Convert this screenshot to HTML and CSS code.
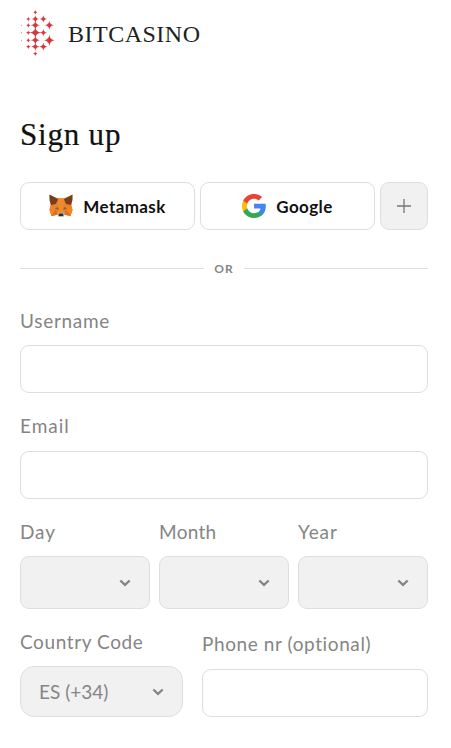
FILE: index.html
```
<!DOCTYPE html>
<html lang="en">
	<head>
		<meta charset="utf-8">
		<title>Sign up</title>
		<link rel="stylesheet" href="styles.css">
	</head>
<body>
	<!-- One arrow and one star, reused below. -->
	<svg class="defs">
		<symbol id="star" viewBox="-8 -8 16 16" overflow="visible"><path d="M0-10Q1-3.500 3.200-3.200Q3.500-1 10 0Q3.500 1 3.200 3.200Q1 3.500 0 10Q-1 3.500-3.200 3.200Q-3.500 1-10 0Q-3.500-1-3.200-3.200Q-1-3.500 0-10z"/></symbol>
		<symbol id="arrow" viewBox="0 0 12 8"><path d="M1.3 1.5L6 5.9L10.7 1.5" fill="none" stroke="#858585" stroke-width="2.3"/></symbol>
	</svg>

	<div class="page">
		<div class="logo">
			<svg class="logoMark" viewBox="30 27 108 144" fill="#d63840">
				<use href="#star" x="32" y="74" width="4" height="4"/>
				<use href="#star" x="32" y="96" width="4" height="4"/>
				<use href="#star" x="32" y="119" width="4" height="4"/>
				<use href="#star" x="49" y="51" width="12" height="12"/>
				<use href="#star" x="49" y="70" width="12" height="12"/>
				<use href="#star" x="49" y="92" width="12" height="12"/>
				<use href="#star" x="49" y="115" width="12" height="12"/>
				<use href="#star" x="49" y="134" width="12" height="12"/>
				<use href="#star" x="70" y="31" width="12" height="12"/>
				<use href="#star" x="67" y="48" width="18" height="18"/>
				<use href="#star" x="65" y="65" width="22" height="22"/>
				<use href="#star" x="62" y="84" width="28" height="28"/>
				<use href="#star" x="65" y="110" width="22" height="22"/>
				<use href="#star" x="66" y="130" width="20" height="20"/>
				<use href="#star" x="70" y="155" width="12" height="12"/>
				<use href="#star" x="91" y="48" width="18" height="18"/>
				<use href="#star" x="91" y="89" width="18" height="18"/>
				<use href="#star" x="90" y="130" width="20" height="20"/>
				<use href="#star" x="107" y="65" width="22" height="22"/>
				<use href="#star" x="104" y="107" width="28" height="28"/>
			</svg>
			<span class="logoText">BITCASINO</span>
		</div>

		<h1>Sign up</h1>

		<div class="social">
			<button class="socialButton metamask">
				<svg width="24" height="24" viewBox="0.5 1 23 23">
					<path fill="#e9822a" d="M1 2L9 5H15L23 2L22 11L23 16L21 22L15.5 21L14 23H10L8.5 21L3 22L1 16L2 11z"/>
					<path fill="#763e1a" d="M1 1.500L9.300 6L7 10.500L2.500 11.500L1 7zM23 1.500L14.700 6L17 10.500L21.500 11.500L23 7z"/>
					<path fill="#f08a2c" d="M9 5H15L14 16L15.500 21H8.500L10 16z"/>
					<path fill="#dc7022" d="M1 16L7 15.500L8.500 21L3 22zM23 16L17 15.500L15.500 21L21 22z"/>
					<path fill="#f5841f" d="M1 16L2.500 12L7 15.500L3 22zM23 16L21.500 12L17 15.500L21 22z"/>
					<path fill="#94664b" d="M6 15L9 13.500L9.700 16zM18 15L15 13.500L14.300 16z"/>
					<path fill="#68615e" d="M7.500 15L9 14.300L9.500 16zM16.500 15L15 14.300L14.500 16z"/>
					<path fill="#c9bdb0" d="M8.300 20L10 19H14L15.700 20L14 23H10z"/>
					<path fill="#233447" d="M10 19.800H14L14.300 22H9.700z"/>
				</svg>
				<span>Metamask</span>
			</button>
			<button class="socialButton google">
				<svg width="24" height="24" viewBox="0 0 24 24">
					<path fill="#4285f4" d="M23.800 12.300c0-.8-.1-1.600-.2-2.500H12v4.800h6.600c-.3 1.500-1.100 2.800-2.400 3.700v3h3.900c2.300-2.100 3.700-5.200 3.700-9z"/>
					<path fill="#34a853" d="M12 24c3.300 0 6-1.100 8.100-2.900l-3.900-3c-1.100.7-2.500 1.200-4.200 1.200-3.200 0-5.900-2.100-6.800-5H1.200v3.100C3.200 21.300 7.300 24 12 24z"/>
					<path fill="#fbbc05" d="M5.200 14.300c-.5-1.500-.5-3.100 0-4.600V6.600h-4c-1.600 3.400-1.600 7.400 0 10.800z"/>
					<path fill="#ea4335" d="M12 4.700c1.800 0 3.400.6 4.700 1.800l3.400-3.400C18 1.200 15.200 0 12 0 7.300 0 3.200 2.700 1.200 6.600l4 3.100c.9-2.900 3.600-5 6.800-5z"/>
				</svg>
				<span>Google</span>
			</button>
			<button class="socialButton more" aria-label="More">
				<svg width="14" height="14" viewBox="0 0 14 14"><path d="M0 7H14M7 0V14" stroke="#777" stroke-width="1.3"/></svg>
			</button>
		</div>

		<div class="divider">OR</div>

		<form>
			<div class="field">
				<label class="username" for="username">Username</label>
				<input id="username" type="text">
			</div>
			<div class="field">
				<label class="email" for="email">Email</label>
				<input id="email" type="text">
			</div>
			<div class="row birth">
				<div class="field">
					<label class="day">Day</label>
					<div class="select"><svg width="12" height="8"><use href="#arrow"/></svg></div>
				</div>
				<div class="field">
					<label class="month">Month</label>
					<div class="select"><svg width="12" height="8"><use href="#arrow"/></svg></div>
				</div>
				<div class="field">
					<label class="year">Year</label>
					<div class="select"><svg width="12" height="8"><use href="#arrow"/></svg></div>
				</div>
			</div>
			<div class="row phone">
				<div class="field">
					<label class="country">Country Code</label>
					<div class="select code"><span>ES (+34)</span><svg width="12" height="8"><use href="#arrow"/></svg></div>
				</div>
				<div class="field">
					<label class="number" for="phone">Phone nr (optional)</label>
					<input id="phone" type="text">
				</div>
			</div>
		</form>
	</div>
</body>
</html>
```
FILE: styles.css
```
* {
	box-sizing: border-box;
}
body {
	margin: 0;
	background-color: #fff;
	color: #858585;
	font-family: Lato, 'Liberation Sans', sans-serif;
}
.defs {
	display: none;
}
.page {
	width: 448px;
	padding: 9px 20px 0;
}
.logo {
	display: flex;
	align-items: center;
	height: 48px;
}
.logoMark {
	width: 36px;
	height: 48px;
}
.logoText {
	margin-left: 12px;
	padding-top: 1px;
	color: #231f20;
	font-family: 'Liberation Serif', serif;
	font-size: 24px;
	line-height: 48px;
	letter-spacing: 0.5px;
	white-space: nowrap;
}
h1 {
	margin: 58px 0 27px;
	color: #111;
	font-family: 'Liberation Serif', serif;
	font-size: 31px;
	font-weight: normal;
	line-height: 40px;
	letter-spacing: 0.8px;
	-webkit-text-stroke: 0.2px #111;
}
.social {
	display: flex;
	gap: 5px;
}
.socialButton {
	display: flex;
	align-items: center;
	justify-content: center;
	gap: 10px;
	width: 175px;
	height: 48px;
	padding: 0;
	border: 1px solid #dedede;
	border-radius: 9px;
	background-color: #fff;
	color: #111;
	font-family: inherit;
	font-size: 17px;
	font-weight: bold;
	line-height: 24px;
	letter-spacing: 0.4px;
}
.socialButton span {
	padding-top: 2px;
}
.more {
	width: 48px;
	background-color: #f1f1f1;
}
.divider {
	display: flex;
	align-items: center;
	gap: 10px;
	margin: 29px 0 31px;
	font-size: 12px;
	font-weight: bold;
	line-height: 19px;
	letter-spacing: 1px;
}
.divider:before, .divider:after {
	content: "";
	flex: 1;
	height: 1px;
	background-color: #dedede;
}
.field {
	margin-bottom: 22px;
}
label {
	display: block;
	margin-bottom: 14px;
	font-size: 19px;
	line-height: 22px;
	letter-spacing: 0.6px;
	white-space: nowrap;
}
.username {
	margin-bottom: 12px;
	line-height: 24px;
	letter-spacing: 0.7px;
}
.email {
	letter-spacing: 1px;
}
.day, .year {
	letter-spacing: 0.9px;
}
.month {
	letter-spacing: 0.3px;
}
input {
	display: block;
	width: 100%;
	height: 48px;
	padding: 0 18px;
	border: 1px solid #dedede;
	border-radius: 9px;
	background-color: #fff;
	font: inherit;
}
.row {
	display: grid;
	align-items: end;
}
.row .select {
	margin-top: -1px;
}
.birth {
	grid-template-columns: 1fr 1fr 1fr;
	gap: 9px;
}
.phone {
	grid-template-columns: 163px 1fr;
	gap: 19px;
}
.select {
	display: flex;
	align-items: center;
	justify-content: flex-end;
	height: 53px;
	padding: 0 18px;
	border: 1px solid #dedede;
	border-radius: 9px;
	background-color: #f1f1f1;
	font-size: 19px;
}
.code {
	justify-content: space-between;
	height: 51px;
	border-radius: 14px;
}
```
